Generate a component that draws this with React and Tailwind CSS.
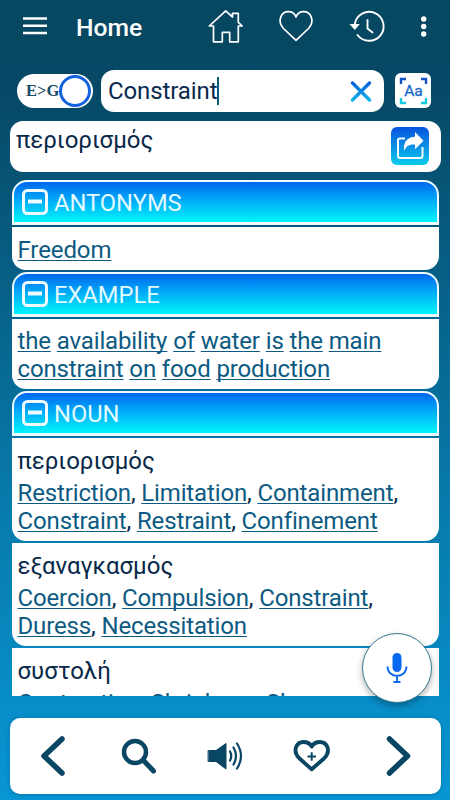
import React from "react";

const INK = "#084663";

function Words({ items, sep }) {
  return items.map((w, i) => (
    <React.Fragment key={i}>
      <span className="text-[#0d5a82] underline decoration-1 underline-offset-[2px] [text-decoration-skip-ink:none]">{w}</span>
      {i < items.length - 1 ? sep : ""}
    </React.Fragment>
  ));
}

function SectionHeader({ title }) {
  return (
    <div className="flex h-[45px] w-full items-center rounded-t-[15px] border-2 border-b-[3px] border-[#edfaff] bg-linear-to-b from-[#0066ee] to-[#00f5fa] pl-2">
      <svg width="26" height="26" viewBox="0 0 26 26" className="shrink-0" fill="none" stroke="#effbff">
        <rect x="1.5" y="1.5" width="23" height="23" rx="4" strokeWidth="3" />
        <path d="M6 12.500H20" strokeWidth="4" />
      </svg>
      <span className="ml-[6px] mt-[2px] text-[23.7px] leading-7 text-[#e3faff]">{title}</span>
    </div>
  );
}

function Entry({ greek, lines }) {
  return (
    <div className="h-[103px] shrink-0 rounded-b-[14px] bg-white pl-[5.5px] pt-[9px]">
      <div className="h-[33px] text-[24px] leading-[28px] text-[#08294a]">{greek}</div>
      {lines.map((l, i) => (
        <div key={i} className="whitespace-nowrap text-[24px] leading-[27.5px] tracking-[-0.14px] text-[#08294a]">
          <Words items={l} sep=", " />
          {i < lines.length - 1 && ","}
        </div>
      ))}
    </div>
  );
}

export default function App() {
  return (
    <div className="relative flex h-[800px] w-[450px] flex-col overflow-hidden bg-linear-to-b from-[#064865] from-10% via-[#0778a8] via-60% to-[#0896d4] font-['Roboto','Noto_Sans',sans-serif]">
      <header className="flex h-[61px] shrink-0 items-start bg-[#064762]">
        <svg width="450" height="61" viewBox="0 0 450 61" fill="none" stroke="#fff" className="absolute">
          <path d="M23 18.5H47M23 25.8H47M23 33H47" strokeWidth="2.4" />
          <g strokeWidth="1.7" strokeLinejoin="round" strokeLinecap="round">
            <path d="M209.300 26L225.700 10.800L232.500 17V13.300H238.300V22.300L242.200 26H238.300V41.800H229.700V32.300H222.300V41.800H213.500V26Z" />
            <path d="M296 40.300L283.500 28.500C276.500 20.500 281.500 11.700 288.300 11.700C292 11.700 294.800 13.800 296 17C297.200 13.800 300 11.700 303.700 11.700C310.500 11.700 315.500 20.500 308.500 28.500Z" />
            <path d="M354.800 24A14.500 14.500 0 1 1 357.500 35M367.500 20V28.500L372.500 32.500" strokeWidth="1.900" />
          </g>
          <path d="M349.500 24H359.800L354.800 30Z" fill="#fff" stroke="none" />
          <g fill="#fff" stroke="none"><circle cx="423.700" cy="19" r="2.700" /><circle cx="423.700" cy="26.500" r="2.700" /><circle cx="423.700" cy="34" r="2.700" /></g>
        </svg>
        <h1 className="ml-[76px] mt-[13px] text-[24.7px] font-medium leading-[30px] text-white">Home</h1>
      </header>

      <div className="flex h-[60px] shrink-0 items-start pl-[17px] pt-[9px]">
        <div className="mt-1 flex h-[34px] w-[76px] items-center rounded-full bg-white pl-[9px]">
          <span className="w-[33px] shrink-0 whitespace-nowrap font-['Liberation_Serif',serif] text-[16.5px] font-bold text-[#174b66]">E&gt;G</span>
          <span className="h-8 w-8 shrink-0 rounded-full border-[3.5px] border-[#1261df] bg-white" />
        </div>
        <div className="ml-2 flex h-[42px] w-[283px] items-center rounded-[13px] bg-white pl-[7px] pr-[12px]">
          <span className="text-[24px] leading-[30px] tracking-[-0.1px] text-[#09294e]">Constraint</span>
          <span className="h-[28px] w-[2px] bg-[#0b577e]" />
          <svg width="22" height="22" viewBox="0 0 22 22" className="ml-auto" fill="none">
            <defs><linearGradient id="cross" gradientUnits="userSpaceOnUse" x1="0" y1="0" x2="0" y2="22"><stop stopColor="#0753d9" /><stop offset="1" stopColor="#0bbbed" /></linearGradient></defs>
            <path d="M2.500 3L19.500 20M19.500 3L2.500 20" stroke="url(#cross)" strokeWidth="3.300" strokeLinecap="round" />
          </svg>
        </div>
        <div className="ml-[11px] mt-[3px] h-[35px] w-9 rounded-[6px] bg-white">
          <svg width="36" height="35" viewBox="0 0 36 35" fill="none">
            <path d="M6 11V6H11M26 6H31V11" stroke="#1454c4" strokeWidth="2.400" />
            <path d="M6 25V30H11M26 30H31V25" stroke="#12cbe0" strokeWidth="2.400" />
            <text x="18.500" y="23" textAnchor="middle" fontFamily="Roboto" fontSize="15.500" fill="#1769c6" stroke="#1769c6" strokeWidth=".3">Aa</text>
          </svg>
        </div>
      </div>

      <div className="ml-[10px] flex h-[51px] w-[431px] shrink-0 justify-between rounded-[13px] bg-white pl-[6px] pr-3">
        <span className="mt-[5px] text-[24px] leading-7 text-[#08294a]">περιορισμός</span>
        <svg width="38" height="38" viewBox="0 0 38 38" className="mt-[6px]" fill="none">
          <defs><linearGradient id="share" x2="0" y2="1"><stop stopColor="#0753dd" /><stop offset="1" stopColor="#0bcbed" /></linearGradient></defs>
          <rect width="38" height="38" rx="6" fill="url(#share)" />
          <path d="M14 11.500H9Q7 11.500 7 13.500V29Q7 31 9 31H29.500Q31.500 31 31.500 29V20" stroke="#f2fcff" strokeWidth="2" />
          <path d="M24 5L32.500 13.700L24 22.300V17.500C18 17 15 19 13.500 24C11.500 16 16 10 24 9.700Z" fill="#fff" />
        </svg>
      </div>

      <main className="ml-3 mt-2 flex h-[516px] w-[427px] shrink-0 flex-col gap-[2px] overflow-hidden">
        <div className="shrink-0"><SectionHeader title="ANTONYMS" /></div>
        <div className="h-[43px] shrink-0 rounded-b-[14px] bg-white pl-[5.5px] pt-[9px] text-[24px] leading-[28px] tracking-[-0.1px]"><Words items={["Freedom"]} /></div>
        <div className="shrink-0"><SectionHeader title="EXAMPLE" /></div>
        <div className="h-[70px] shrink-0 rounded-b-[14px] bg-white pl-[5.5px] pt-[9px] text-[24px] leading-[27.5px] tracking-[-0.14px]">
          <div className="whitespace-nowrap"><Words items={["the", "availability", "of", "water", "is", "the", "main"]} sep=" " /></div>
          <div className="whitespace-nowrap"><Words items={["constraint", "on", "food", "production"]} sep=" " /></div>
        </div>
        <div className="shrink-0"><SectionHeader title="NOUN" /></div>
        <Entry greek="περιορισμός" lines={[["Restriction", "Limitation", "Containment"], ["Constraint", "Restraint", "Confinement"]]} />
        <Entry greek="εξαναγκασμός" lines={[["Coercion", "Compulsion", "Constraint"], ["Duress", "Necessitation"]]} />
        <Entry greek="συστολή" lines={[["Contraction", "Shrinkage", "Shyness"]]} />
      </main>

      <div className="absolute left-[362px] top-[633px] flex h-[70px] w-[70px] items-center justify-center rounded-full border border-[#367994] bg-white shadow-[0_3px_6px_rgba(0,0,0,0.3)]">
        <svg width="24" height="34" viewBox="0 0 24 34" fill="none" stroke="#0868ef">
          <rect x="7.500" y="2" width="9" height="19" rx="4.500" fill="#0868ef" stroke="none" />
          <path d="M2.500 15.500C2.500 28 21.500 28 21.500 15.500M12 25V31M8.500 31H15.500" strokeWidth="1.800" />
        </svg>
      </div>

      <nav className="ml-[10px] mt-[22px] h-[76px] w-[431px] shrink-0 rounded-[10px] bg-white shadow-[0_1px_4px_rgba(0,50,80,0.3)]">
        <svg width="431" height="76" viewBox="10 718 431 76" fill="none" stroke={INK} strokeLinecap="round" strokeLinejoin="round">
          <path d="M62 739L44 756L62 773M389.500 739L407.500 756L389.500 773" strokeWidth="5.500" />
          <circle cx="135" cy="752" r="11" strokeWidth="4.500" />
          <path d="M143.500 760.500L153.500 771" strokeWidth="5" />
          <path d="M208.500 750.500H216L226 743.500V769L216 761.500H208.500Z" fill={INK} strokeWidth="1" />
          <path d="M230 751.500Q232.500 756 230 760.500M233.500 747.500Q238.500 756 233.500 764.500M237 743.500Q245 756 237 768.500" strokeWidth="2.200" />
          <path d="M311.700 769.300L299.500 758.500C291.500 750.500 297 742 303.500 742C307.500 742 310 743.500 311.700 746.500C313.400 743.500 316 742 320 742C326.500 742 332 750.500 324 758.500Z" strokeWidth="3.800" />
          <path d="M307.500 756.500H316M311.700 752.200V760.800" strokeWidth="1.900" strokeLinecap="butt" />
        </svg>
      </nav>
    </div>
  );
}
